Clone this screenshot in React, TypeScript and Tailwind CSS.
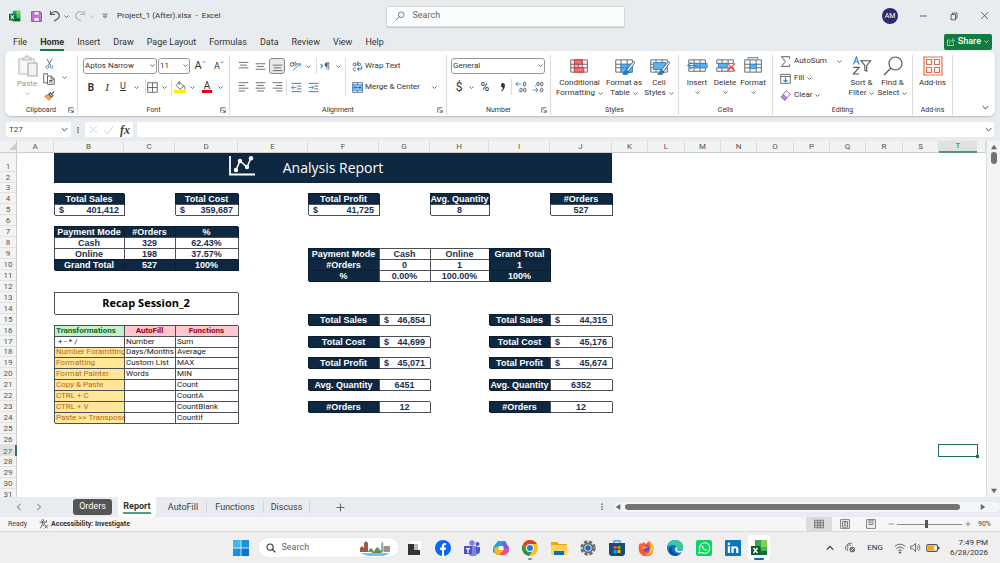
import React from "react";

type Kids = { children?: React.ReactNode };

function Svg({ className = "size-3", box = "0 0 16 16", children }: Kids & { className?: string; box?: string }) {
  return (
    <svg viewBox={box} className={`shrink-0 ${className}`} fill="none" stroke="#555" strokeWidth="1.2" aria-hidden="true">
      {children}
    </svg>
  );
}

function Chevron({ className = "size-[5px]" }: { className?: string }) {
  return (
    <svg viewBox="0 0 10 10" className={`shrink-0 ${className}`} fill="none" stroke="currentColor" strokeWidth="1.4" aria-hidden="true">
      <path d="M1 3l4 4 4-4" />
    </svg>
  );
}

function Tool({ label, w = "w-4", className = "", children }: Kids & { label: string; w?: string; className?: string }) {
  return (
    <button type="button" aria-label={label} className={`flex h-4 shrink-0 items-center justify-center ${w} ${className}`}>
      {children}
    </button>
  );
}

function Divider() {
  return <span className="h-4 w-px shrink-0 bg-[#dcdcdc]" />;
}

function Group({ name, w, launcher, children }: Kids & { name: string; w: string; launcher?: boolean }) {
  return (
    <section aria-label={name} className={`flex shrink-0 flex-col pt-1 pb-px ${w}`}>
      <div className="flex flex-1 flex-col border-r border-[#dcdcdc]">
        <div className="flex-1">{children}</div>
        <div className="relative text-center text-[7px] leading-[10px] text-[#333]">
          {name}
          {launcher && (
            <button type="button" aria-label={`${name} settings`} className="absolute top-[2px] right-[3px]">
              <Svg className="size-[6px]">
                <path d="M2 15V2h12M6 6l8 8M14 7v7H7" strokeWidth="2.2" />
              </Svg>
            </button>
          )}
        </div>
      </div>
    </section>
  );
}

function Combo({ label, value, w }: { label: string; value: string; w: string }) {
  return (
    <div className={`relative h-4 shrink-0 ${w}`}>
      <select aria-label={label} className="block size-full appearance-none rounded-[3px] border border-[#999] bg-white px-px text-[8px] leading-[14px]">
        <option>{value}</option>
      </select>
      <span className="pointer-events-none absolute top-[5px] right-[2px]">
        <Chevron />
      </span>
    </div>
  );
}

function Lines({ rows }: { rows: [number, number, number][] }) {
  return (
    <Svg className="size-[11px]">
      {rows.map(([x1, x2, y]) => (
        <path key={y} d={`M${x1} ${y}H${x2}`} />
      ))}
    </Svg>
  );
}

function Big({ icon, lines, w, below }: { icon: React.ReactNode; lines: string[]; w: string; below?: boolean }) {
  return (
    <button type="button" className={`flex shrink-0 flex-col items-center whitespace-nowrap text-[8px] leading-[10px] ${w}`}>
      <span className="mb-[2px] flex h-[21px] items-center">{icon}</span>
      <span>{lines[0]}</span>
      {lines[1] && (
        <span className="flex items-center gap-[3px]">
          {lines[1]}
          <Chevron />
        </span>
      )}
      {below && <Chevron className="mt-[2px] size-[5px]" />}
    </button>
  );
}

function GridIcon({ children, clip }: Kids & { clip?: boolean }) {
  return (
    <svg viewBox="0 0 24 20" className="h-[18px] w-[21px]" fill="none" stroke="#666" strokeWidth="1.1" aria-hidden="true">
      <path d={clip ? "M2 3h19v4H2zM2 12h19v4H2zM8 3v4M15 3v4M8 12v4M15 12v4" : "M2 3h19v14H2zM2 8h19M2 12h19M8 3v14M15 3v14"} />
      {children}
    </svg>
  );
}

function Ribbon() {
  return (
    <div className="mx-[5px] flex h-[65px] rounded-md bg-white text-[#333] shadow-[0_1px_2px_#b8bcc0]">
      <Group name="Clipboard" w="w-[73px]" launcher>
        <div className="flex pl-2">
          <button type="button" className="flex w-7 flex-col items-center text-[8px] leading-[10px] text-[#999]">
            <Svg className="mb-[2px] size-[22px]" box="0 0 22 22">
              <path d="M3 4h15v15H3z" stroke="#bbb" fill="#f7f7f7" />
              <path d="M7 5V3h2l1-2h2l1 2h2v2z" stroke="#bbb" fill="#eee" />
              <path d="M12 8h9v13h-9z" stroke="#aaa" fill="#f2f2f2" />
            </Svg>
            Paste
            <Chevron className="mt-[2px] size-[5px]" />
          </button>
          <div className="flex w-4 flex-col items-center">
            <Tool label="Cut">
              <Svg className="size-[11px]">
                <path d="M4 1l6 10M12 1L6 11" />
                <circle cx="5" cy="13" r="2" stroke="#2b88d8" />
                <circle cx="11" cy="13" r="2" stroke="#2b88d8" />
              </Svg>
            </Tool>
            <Tool label="Copy">
              <Svg className="size-3">
                <path d="M6 3V1H1v12h4M6 4h5l4 4v7H6zM11 4v4h4M8 10h5M8 12h5" />
              </Svg>
            </Tool>
            <Tool label="Format Painter">
              <Svg className="size-[11px]">
                <path d="M1 9l6-3 4 4-4 5z" fill="#f5a25d" stroke="#d8702a" />
                <path d="M7 6l2-2 4 4-2 2zM11 6l4-4" strokeWidth="1.6" />
              </Svg>
            </Tool>
          </div>
          <span className="mt-5 ml-[5px]">
            <Chevron />
          </span>
        </div>
      </Group>

      <Group name="Font" w="w-[152px]" launcher>
        <div className="flex flex-col gap-[5px] pt-[3px] pl-[5px]">
          <div className="flex gap-px">
            <Combo label="Font" value="Aptos Narrow" w="w-[74px]" />
            <Combo label="Font size" value="11" w="w-8" />
            <Tool label="Increase font size" w="w-[18px]">
              <span className="text-[11px] leading-4">A</span>
              <Svg className="mb-2 size-1"><path d="M2 12l6-7 6 7" stroke="#2b88d8" strokeWidth="3" /></Svg>
            </Tool>
            <Tool label="Decrease font size" w="w-[18px]">
              <span className="text-[9px] leading-4">A</span>
              <Svg className="mb-2 size-1"><path d="M2 5l6 7 6-7" stroke="#2b88d8" strokeWidth="3" /></Svg>
            </Tool>
          </div>
          <div className="flex items-center">
            <Tool label="Bold"><b className="text-[10px]">B</b></Tool>
            <Tool label="Italic"><i className="font-['Liberation_Serif',serif] text-[11px]">I</i></Tool>
            <Tool label="Underline"><u className="text-[9px]">U</u></Tool>
            <Tool label="Underline styles" w="w-[10px]"><Chevron /></Tool>
            <span className="w-1" />
            <Divider />
            <Tool label="Borders" w="w-3">
              <Svg className="size-[11px]"><path d="M1 1h14v14H1zM8 1v14M1 8h14" /></Svg>
            </Tool>
            <Tool label="Border styles" w="w-3"><Chevron /></Tool>
            <span className="w-px" />
            <Divider />
            <Tool label="Fill colour" w="w-[15px]">
              <Svg className="size-3">
                <path d="M7 1l6 6-5 4-5-5zM7 1v4M13 6c2 2 2 4 1 5" />
                <path d="M0 14h16" stroke="#ffee00" strokeWidth="4" />
              </Svg>
            </Tool>
            <Tool label="Fill colours" w="w-[10px]"><Chevron /></Tool>
            <Tool label="Font colour" w="w-5">
              <span className="w-[10px] border-b-[3px] border-[#e8000b] text-[10px] leading-[9px]">A</span>
            </Tool>
            <Tool label="Font colours" w="w-[6px]"><Chevron /></Tool>
          </div>
        </div>
      </Group>

      <Group name="Alignment" w="w-[217px]" launcher>
        <div className="flex pt-[3px] pl-[5px]">
          <div className="flex w-[110px] flex-col gap-[5px]">
            <div className="flex items-center gap-px">
              <Tool label="Top align"><Lines rows={[[1, 15, 2], [3, 13, 6], [1, 15, 10]]} /></Tool>
              <Tool label="Middle align"><Lines rows={[[1, 15, 4], [3, 13, 8], [1, 15, 12]]} /></Tool>
              <Tool label="Bottom align" className="rounded-[3px] border border-[#888] bg-[#e9e9e9]">
                <Lines rows={[[1, 15, 6], [3, 13, 10], [1, 15, 14]]} />
              </Tool>
              <Tool label="Orientation" w="w-[18px]">
                <Svg className="size-3">
                  <circle cx="4" cy="6" r="2.4" />
                  <path d="M6 3l3 5M8 2l3 5" />
                  <path d="M5 14L15 5M11 5h4v4" stroke="#2b88d8" />
                </Svg>
              </Tool>
              <Tool label="Orientations" w="w-[6px]"><Chevron /></Tool>
              <span className="w-[3px]" />
              <Divider />
              <Tool label="Text direction" w="w-[14px]">
                <Svg className="size-[10px]">
                  <path d="M1 5l3 3-3 3" stroke="#2b88d8" strokeWidth="1.8" />
                  <path d="M11 14V3M14 14V3M15 3h-5" />
                  <path d="M11 3a3 3 0 000 6z" fill="#444" />
                </Svg>
              </Tool>
              <Tool label="Text directions" w="w-[10px]"><Chevron /></Tool>
            </div>
            <div className="flex items-center gap-px">
              <Tool label="Align left"><Lines rows={[[1, 15, 1], [1, 10, 5], [1, 15, 9], [1, 10, 13]]} /></Tool>
              <Tool label="Center"><Lines rows={[[1, 15, 1], [3, 13, 5], [1, 15, 9], [3, 13, 13]]} /></Tool>
              <Tool label="Align right"><Lines rows={[[1, 15, 1], [6, 15, 5], [1, 15, 9], [6, 15, 13]]} /></Tool>
              <Divider />
              <Tool label="Decrease indent">
                <Svg className="size-[11px]">
                  <path d="M1 2h14M9 6h6M9 10h6M1 14h14" />
                  <path d="M8 8H1M4 5L1 8l3 3" stroke="#2b88d8" />
                </Svg>
              </Tool>
              <Tool label="Increase indent">
                <Svg className="size-[11px]">
                  <path d="M1 2h14M9 6h6M9 10h6M1 14h14" />
                  <path d="M1 8h7M5 5l3 3-3 3" stroke="#2b88d8" />
                </Svg>
              </Tool>
            </div>
          </div>
          <div className="flex h-[38px] flex-1 flex-col gap-[5px] border-l border-[#dcdcdc] pl-[6px] text-[8px]">
            <button type="button" className="flex h-4 items-center gap-[2px]">
              <Svg className="size-[11px]">
                <circle cx="3.500" cy="5" r="2" />
                <path d="M5.500 2.500V7" />
                <circle cx="10.500" cy="5" r="2" />
                <path d="M8.500 0v7" />
                <path d="M5.500 10.500a2.200 2.200 0 100 3.500" />
                <path d="M14 7v4.500H8M10 9.500l-2 2 2 2.500" stroke="#2b88d8" strokeWidth="1.6" />
              </Svg>
              Wrap Text
            </button>
            <div className="flex h-4 items-center">
              <button type="button" className="flex items-center gap-[2px]">
                <Svg className="size-[11px]">
                  <path d="M1 1h14v14H1z" fill="#fff" />
                  <path d="M1 4h14v8H1z" fill="#8ccaf5" stroke="#2b88d8" />
                  <path d="M8 1v3M8 12v3M3 8h10M5 6L3 8l2 2M11 6l2 2-2 2" stroke="#1565a8" />
                </Svg>
                Merge &amp; Center
              </button>
              <span className="ml-3"><Chevron /></span>
            </div>
          </div>
        </div>
      </Group>

      <Group name="Number" w="w-[104px]" launcher>
        <div className="flex flex-col gap-[5px] pt-[3px] pl-1">
          <Combo label="Number format" value="General" w="w-[94px]" />
          <div className="flex items-center">
            <Tool label="Accounting format"><span className="text-[12px]">$</span></Tool>
            <Tool label="Currencies" w="w-2"><Chevron /></Tool>
            <Tool label="Percent" w="w-5"><span className="text-[12px]">%</span></Tool>
            <Tool label="Comma style">
              <Svg className="size-[10px]">
                <path d="M5 4a3 3 0 116 2c0 4-2 7-5 9l-1-1c2-2 3-4 3-5-2 0-4-2-3-5z" fill="#333" stroke="none" />
              </Svg>
            </Tool>
            <Divider />
            <Tool label="Increase decimal" w="w-[17px]">
              <Svg className="size-3">
                <path d="M8 4H1M4 1L1 4l3 3" stroke="#2b88d8" />
                <ellipse cx="13" cy="4" rx="1.600" ry="2.600" />
                <ellipse cx="8" cy="12" rx="1.600" ry="2.600" />
                <ellipse cx="13" cy="12" rx="1.600" ry="2.600" />
                <path d="M10 6.500h1M4 14.500h1" />
              </Svg>
            </Tool>
            <Tool label="Decrease decimal" w="w-[17px]">
              <Svg className="size-3">
                <ellipse cx="8" cy="4" rx="1.600" ry="2.600" />
                <ellipse cx="13" cy="4" rx="1.600" ry="2.600" />
                <ellipse cx="13" cy="12" rx="1.600" ry="2.600" />
                <path d="M4 6.500h1M10 14.500h1" />
                <path d="M1 12h7M5 9l3 3-3 3" stroke="#2b88d8" />
              </Svg>
            </Tool>
          </div>
        </div>
      </Group>

      <Group name="Styles" w="w-32">
        <div className="flex pl-1">
          <Big
            w="w-[49px]"
            lines={["Conditional", "Formatting"]}
            icon={
              <GridIcon>
                <path d="M6 3h9v5H6zM6 12h11v5H6z" fill="#f87171" stroke="#d13438" />
                <path d="M6 8h5v4H6z" fill="#8ccaf5" stroke="#d13438" />
              </GridIcon>
            }
          />
          <Big
            w="w-10"
            lines={["Format as", "Table"]}
            icon={
              <GridIcon>
                <path d="M8 8h13v9H8z" fill="#5db1ee" stroke="#2b88d8" />
                <path d="M8 12h13M15 8v9" stroke="#2b88d8" />
                <path d="M22 5l2 1-8 11-2-2z" fill="#fff" />
                <path d="M14 14l3 3c-1 3-5 3-7 2 3-1 2-3 4-5z" fill="#2b88d8" stroke="#1565a8" />
              </GridIcon>
            }
          />
          <Big
            w="w-[30px]"
            lines={["Cell", "Styles"]}
            icon={
              <GridIcon>
                <path d="M5 6h14v8H5z" fill="#5db1ee" stroke="#2b88d8" />
                <path d="M22 5l2 1-8 11-2-2z" fill="#fff" />
                <path d="M14 14l3 3c-1 3-5 3-7 2 3-1 2-3 4-5z" fill="#2b88d8" stroke="#1565a8" />
              </GridIcon>
            }
          />
        </div>
      </Group>

      <Group name="Cells" w="w-[94px]">
        <div className="flex pl-1">
          <Big
            w="w-7"
            below
            lines={["Insert"]}
            icon={
              <GridIcon clip>
                <path d="M8 7h15v5H8zM15 7v5" fill="#5db1ee" stroke="#2b88d8" />
                <path d="M12 9.500H1M5 5.500l-4 4 4 4" stroke="#2b88d8" strokeWidth="1.4" />
              </GridIcon>
            }
          />
          <Big
            w="w-7"
            below
            lines={["Delete"]}
            icon={
              <GridIcon clip>
                <path d="M4 7h10v5H4z" fill="#5db1ee" stroke="#2b88d8" />
                <path d="M14 7l9 9M23 7l-9 9" stroke="#e8484f" strokeWidth="1.4" />
              </GridIcon>
            }
          />
          <Big
            w="w-7"
            below
            lines={["Format"]}
            icon={
              <GridIcon>
                <path d="M8 8h7v5H8z" fill="#5db1ee" stroke="#2b88d8" />
                <path d="M6 .5h11M6 0v2M17 0v2" stroke="#2b88d8" />
              </GridIcon>
            }
          />
        </div>
      </Group>

      <Group name="Editing" w="w-[140px]">
        <div className="flex pl-[7px]">
          <div className="mr-1 flex w-[62px] flex-col gap-[5px] text-[8px] leading-3">
            <div className="flex items-center justify-between">
              <button type="button" className="flex items-center gap-[3px]">
                <Svg className="size-[11px]"><path d="M14 4V1H2l6 7-6 7h12v-3" strokeWidth="1.4" /></Svg>
                AutoSum
              </button>
              <Chevron />
            </div>
            <button type="button" className="flex items-center gap-[3px]">
              <Svg className="size-[11px]">
                <path d="M1 2h14v13H1zM1 5h14" />
                <path d="M8 6v7M5 10l3 3 3-3" stroke="#2b88d8" strokeWidth="1.6" />
              </Svg>
              Fill
              <Chevron />
            </button>
            <button type="button" className="flex items-center gap-[3px]">
              <Svg className="size-[11px]">
                <path d="M9 1l6 5-8 9-5-5z" fill="#fff" stroke="#8e4bab" />
                <path d="M5 7l5 4-3 4-5-5z" fill="#c58fdc" stroke="#8e4bab" />
              </Svg>
              Clear
              <Chevron />
            </button>
          </div>
          <Big
            w="w-[31px]"
            lines={["Sort &", "Filter"]}
            icon={
              <Svg className="h-[19px] w-[22px]" box="0 0 22 20">
                <path d="M2 9l3-8 3 8M3 6h4" stroke="#2b88d8" strokeWidth="1.2" />
                <path d="M2 12h6l-6 7h6" />
                <path d="M10 5h10l-4 5v6l-2-1v-5z" />
              </Svg>
            }
          />
          <Big
            w="w-[31px]"
            lines={["Find &", "Select"]}
            icon={
              <Svg className="size-5" box="0 0 20 20">
                <circle cx="12.5" cy="7.500" r="6.500" />
                <path d="M8 12l-7 7" />
              </Svg>
            }
          />
        </div>
      </Group>

      <Group name="Add-ins" w="w-10">
        <Big
          w="w-full"
          lines={["Add-ins"]}
          icon={
            <Svg className="size-5" box="0 0 20 20">
              <path d="M1 1h18v18H1zM3.500 3.500h5v5h-5zM11.500 3.500h5v5h-5zM3.500 11.500h5v5h-5zM11.500 11.500h5v5h-5z" stroke="#e0704f" />
            </Svg>
          }
        />
      </Group>
      <div className="flex flex-1 items-end justify-end pr-[6px] pb-[5px]">
        <button type="button" aria-label="Collapse ribbon"><Chevron className="size-[7px]" /></button>
      </div>
    </div>
  );
}

function ExcelMark({ className }: { className: string }) {
  return (
    <Svg className={className}>
      <path d="M5 1h10v14H5z" fill="#21a366" stroke="none" />
      <path d="M10 1h5v5h-5z" fill="#8fd14f" stroke="none" />
      <path d="M5 8h10v7H5z" fill="#185c37" stroke="none" />
      <path d="M10 6h5v5h-5z" fill="#33c481" stroke="none" />
      <path d="M0 5h9v9H0z" fill="#0f703b" stroke="none" />
      <path d="M2.500 7l4 5M6.500 7l-4 5" stroke="#fff" strokeWidth="1.400" />
    </Svg>
  );
}

function TitleBar() {
  return (
    <header className="grid h-8 shrink-0 grid-cols-[1fr_auto_1fr] items-center text-[8px] text-[#333]">
      <div className="flex items-center pl-[9px]">
        <ExcelMark className="size-3" />
        <button type="button" aria-label="Save" className="ml-[10px]">
          <Svg className="size-[11px]">
            <path d="M1 1h12l2 2v12H1z" fill="#d77fe0" stroke="#a33fb0" strokeWidth="1.600" />
            <path d="M4 1h8v5H4zM4 9h8v6H4z" fill="#fff" stroke="#a33fb0" />
          </Svg>
        </button>
        <button type="button" aria-label="Undo" className="ml-[7px]">
          <Svg className="size-3"><path d="M2 1v5h6M2 6c3-4 7-5 10-2s2 6-1 8l-4 3" strokeWidth="1.500" /></Svg>
        </button>
        <span className="mr-[5px] ml-[3px]"><Chevron /></span>
        <button type="button" aria-label="Redo" className="text-[#aaa]">
          <Svg className="size-3"><path d="M14 1v5H8M14 6c-3-4-7-5-10-2s-2 6 1 8l4 3" stroke="#b5b5b5" strokeWidth="1.500" /></Svg>
        </button>
        <span className="ml-[3px] text-[#aaa]"><Chevron /></span>
        <button type="button" aria-label="Customize toolbar" className="ml-2">
          <Svg className="size-[6px]"><path d="M1 3h14M3 8h10l-5 5z" strokeWidth="2" /></Svg>
        </button>
        <h1 className="ml-[9px] whitespace-pre">Project_1 (After).xlsx  -  Excel</h1>
      </div>
      <label className="ml-[10px] flex h-[21px] w-[239px] items-center gap-2 rounded-[2px] border border-[#d5d9dc] bg-[#fbfcfc] px-2 shadow-[0_1px_1px_#c8ccd0]">
        <Svg className="size-[10px]"><circle cx="10" cy="6" r="4.500" /><path d="M7 9l-6 6" /></Svg>
        <input aria-label="Search" placeholder="Search" className="w-full bg-transparent text-[9px] outline-none placeholder:text-[#666]" />
      </label>
      <div className="flex items-center justify-end gap-[19px] pr-[9px]">
        <span className="flex size-4 items-center justify-center rounded-full bg-[#2f2a70] text-[7px] text-white">AM</span>
        <button type="button" aria-label="Minimize"><Svg className="size-3"><path d="M4 8h9" /></Svg></button>
        <button type="button" aria-label="Restore">
          <Svg className="size-3"><path d="M4 6h6v7H4zM6 6V4h6v7h-2" /></Svg>
        </button>
        <button type="button" aria-label="Close"><Svg className="size-3"><path d="M3 3l9 9M12 3l-9 9" /></Svg></button>
      </div>
    </header>
  );
}

const menus = ["File", "Home", "Insert", "Draw", "Page Layout", "Formulas", "Data", "Review", "View", "Help"];

function MenuBar() {
  return (
    <nav className="flex h-[19px] shrink-0 items-center justify-between pr-2 pl-[13px] text-[9px] text-[#333]">
      <div className="flex gap-[13px]">
        {menus.map((m) =>
          m === "Home" ? (
            <a key={m} href="#home" className="border-b-2 border-[#107c41] pt-[2px] leading-[14px] font-bold">{m}</a>
          ) : (
            <a key={m} href={`#${m}`} className="border-b-2 border-transparent pt-[2px] leading-[14px]">{m}</a>
          ),
        )}
      </div>
      <button type="button" className="flex h-4 items-center gap-[3px] rounded-[2px] bg-[#107c41] px-[3px] text-[9px] font-medium text-white">
        <Svg className="size-2"><path d="M6 4H1v11h12v-4M5 11c0-4 3-6 7-6M10 1l5 4-5 4" stroke="#fff" /></Svg>
        Share
        <Chevron />
      </button>
    </nav>
  );
}

function FormulaBar() {
  return (
    <div className="flex shrink-0 items-center px-[6px] pt-[6px] pb-1 text-[#444]">
      <label className="flex h-[15px] w-[65px] items-center rounded-[2px] bg-white pr-[3px] pl-[3px]">
        <input aria-label="Name box" defaultValue="T27" className="w-full min-w-0 bg-transparent text-[8px] outline-none" />
        <Chevron className="size-[7px]" />
      </label>
      <Svg className="mx-1 size-[6px]"><path d="M8 0v4M8 6v4M8 12v4" strokeWidth="3.500" /></Svg>
      <div className="flex h-[15px] w-12 items-center justify-between rounded-[2px] bg-white pr-[3px] pl-1">
        <Svg className="size-[9px]"><path d="M2 2l12 12M14 2L2 14" stroke="#bbb" /></Svg>
        <Svg className="size-[10px]"><path d="M1 9l4 5L15 2" stroke="#bbb" /></Svg>
        <i className="font-['Liberation_Serif',serif] text-[12px] leading-3 font-bold">fx</i>
      </div>
      <label className="ml-1 flex h-[15px] flex-1 items-center rounded-[2px] bg-white pr-[2px]">
        <input aria-label="Formula" className="w-full bg-transparent text-[8px] outline-none" />
        <Chevron className="size-[7px]" />
      </label>
    </div>
  );
}

const columns: [string, string][] = [
  ["A", "w-[37px]"], ["B", "w-[70px]"], ["C", "w-[51px]"], ["D", "w-[63px]"], ["E", "w-[70px]"], ["F", "w-[71px]"],
  ["G", "w-[51px]"], ["H", "w-[59px]"], ["I", "w-[61px]"], ["J", "w-[62px]"], ["K", "w-[36px]"], ["L", "w-[37px]"],
  ["M", "w-[36px]"], ["N", "w-[36px]"], ["O", "w-[37px]"], ["P", "w-[36px]"], ["Q", "w-[36px]"], ["R", "w-[37px]"],
  ["S", "w-[36px]"], ["T", "w-[38px]"], ["", ""],
];

type Kind = "navy" | "box" | "money" | "note" | "amber" | "good" | "bad" | "banner" | "recap" | "active";
type Cell = { kind: Kind; text: string; cols?: number; rows?: number };

const edge = "shadow-[1px_1px_0_0_#4a5057,inset_1px_1px_0_0_#4a5057]";
const arial = "font-['Liberation_Sans',Arial,sans-serif] text-[9px] font-bold";
const looks: Record<Kind, string> = {
  navy: `bg-[#0e2841] text-white shadow-[1px_1px_0_0_#0a1c30,inset_1px_1px_0_0_#0a1c30] ${arial}`,
  box: `text-[#1c2f52] ${edge} ${arial}`,
  money: `text-[#1c2f52] ${edge} ${arial}`,
  note: `text-[8px] text-[#222] ${edge}`,
  amber: `bg-[#ffe699] text-[8px] text-[#b36b12] ${edge}`,
  good: `bg-[#c6efce] text-[8px] font-bold text-[#0b6b1c] ${edge}`,
  bad: `bg-[#ffc7ce] text-[8px] font-bold text-[#9c0006] ${edge}`,
  banner: "bg-[#0e2841] font-['Open_Sans',sans-serif] text-[14px] text-white",
  recap: `font-['Open_Sans',sans-serif] text-[11px] font-bold text-black ${edge}`,
  active: "",
};

const cells: Record<string, Cell> = {};
const put = (col: string, row: number, kind: Kind, ...texts: string[]) =>
  texts.forEach((text, i) => {
    cells[`${col}${row + i}`] = { kind, text };
  });

cells.B1 = { kind: "banner", text: "Analysis Report", cols: 9, rows: 2 };
cells.B13 = { kind: "recap", text: "Recap Session_2", cols: 3, rows: 2 };
put("B", 4, "navy", "Total Sales");
put("B", 5, "money", "401,412");
put("D", 4, "navy", "Total Cost");
put("D", 5, "money", "359,687");
put("F", 4, "navy", "Total Profit");
put("F", 5, "money", "41,725");
put("H", 4, "navy", "Avg. Quantity");
put("H", 5, "box", "8");
put("J", 4, "navy", "#Orders");
put("J", 5, "box", "527");
put("B", 7, "navy", "Payment Mode");
put("C", 7, "navy", "#Orders");
put("D", 7, "navy", "%");
put("B", 8, "box", "Cash", "Online");
put("C", 8, "box", "329", "198");
put("D", 8, "box", "62.43%", "37.57%");
put("B", 10, "navy", "Grand Total");
put("C", 10, "navy", "527");
put("D", 10, "navy", "100%");
put("F", 9, "navy", "Payment Mode", "#Orders", "%");
put("G", 9, "box", "Cash", "0", "0.00%");
put("H", 9, "box", "Online", "1", "100.00%");
put("I", 9, "navy", "Grand Total", "1", "100%");
["Total Sales", "Total Cost", "Total Profit", "Avg. Quantity", "#Orders"].forEach((name, i) => {
  const row = 15 + i * 2;
  const kind = i < 3 ? "money" : "box";
  put("F", row, "navy", name);
  put("G", row, kind, ["46,854", "44,699", "45,071", "6451", "12"][i]);
  put("I", row, "navy", name);
  put("J", row, kind, ["44,315", "45,176", "45,674", "6352", "12"][i]);
});
put("B", 16, "good", "Transformations");
put("C", 16, "bad", "AutoFill");
put("D", 16, "bad", "Functions");
put("B", 17, "note", " + - * /");
put("B", 18, "amber", "Number Foramtting", "Formatting", "Format Painter", "Copy & Paste", "CTRL + C", "CTRL + V", "Paste >> Transpose");
put("C", 17, "note", "Number", "Days/Months", "Custom List", "Words", "", "", "", "");
put("D", 17, "note", "Sum", "Average", "MAX", "MIN", "Count", "CountA", "CountBlank", "Countif");
put("T", 27, "active", "");

const covered = new Set(["C1", "D1", "E1", "F1", "G1", "H1", "I1", "J1", "B2", "C2", "D2", "E2", "F2", "G2", "H2", "I2", "J2", "C13", "D13", "B14", "C14", "D14"]);

function CellBody({ cell }: { cell: Cell }) {
  switch (cell.kind) {
    case "money":
      return <div className="flex justify-between px-[5px]"><span>$</span><span>{cell.text}</span></div>;
    case "note":
    case "amber":
    case "good":
      return <div className="pl-[2px] whitespace-pre">{cell.text}</div>;
    case "banner":
      return (
        <>
          <div className="flex justify-center">{cell.text}</div>
          <svg viewBox="0 0 26 20" className="absolute top-[3px] left-[175px] h-5 w-[26px]" fill="none" stroke="#fff" strokeWidth="1.800" aria-hidden="true">
            <path d="M1 0v18.500h25" />
            <path d="M7 14l4-9 7 6 4-9" strokeWidth="1.500" />
            <g fill="#fff" stroke="none">
              <circle cx="7" cy="14" r="2.200" /><circle cx="11" cy="5" r="2.200" /><circle cx="18" cy="11" r="2.200" /><circle cx="22" cy="2.300" r="2.200" />
            </g>
          </svg>
        </>
      );
    case "active":
      return (
        <div className="absolute -inset-px border border-[#1e7145]">
          <span className="absolute -right-[2px] -bottom-[2px] size-[3px] bg-[#1e7145]" />
        </div>
      );
    default:
      return <div className="flex justify-center">{cell.text}</div>;
  }
}

function rowHeight(n: number) {
  if (n === 1) return "h-[19px]";
  return n === 3 || n === 18 ? "h-[10px]" : "h-[11px]";
}

function Sheet() {
  return (
    <div className="flex min-h-0 flex-1">
      <div className="flex-1 overflow-hidden bg-white">
        <table className="w-full table-fixed border-separate border-spacing-0 text-[8px] leading-[10px]">
          <colgroup>
            <col className="w-[17px]" />
            {columns.map(([name, w]) => <col key={name} className={w} />)}
          </colgroup>
          <thead>
            <tr className="h-3 bg-[#f1f2f2] text-[#555]">
              <th className="border-r border-b border-[#ccc] p-0">
                <svg viewBox="0 0 8 8" className="ml-auto size-2" aria-hidden="true"><path d="M8 0v7H1z" fill="#ccc" /></svg>
              </th>
              {columns.map(([name]) => (
                <th
                  key={name}
                  scope="col"
                  className={name === "T" ? "border-b-2 border-[#4f9474] bg-[#dfe2e1] p-0 font-normal text-[#2e7d57]" : "border-r border-b border-r-[#dedede] border-b-[#ccc] p-0 font-normal"}
                >
                  {name}
                </th>
              ))}
            </tr>
          </thead>
          <tbody>
            {Array.from({ length: 31 }, (_, i) => i + 1).map((n) => (
              <tr key={n} className={rowHeight(n)}>
                <th
                  scope="row"
                  className={
                    n === 27
                      ? "border-r-2 border-[#2e7d57] bg-[#dfe2e1] p-0 align-bottom leading-[9px] font-normal text-[#2e7d57]"
                      : "border-r border-b border-r-[#ccc] border-b-[#e2e2e2] bg-[#f3f3f3] p-0 align-bottom leading-[9px] font-normal text-[#555]"
                  }
                >
                  {n}
                </th>
                {columns.map(([name]) => {
                  const key = `${name}${n}`;
                  const cell = cells[key];
                  if (covered.has(key)) return null;
                  if (!cell) return <td key={key} className="p-0" />;
                  const clip = key === "B24" || cell.kind === "active" ? "" : "overflow-hidden";
                  return (
                    <td key={key} colSpan={cell.cols} rowSpan={cell.rows} className={`relative p-0 whitespace-nowrap ${clip} ${looks[cell.kind]}`}>
                      <CellBody cell={cell} />
                    </td>
                  );
                })}
              </tr>
            ))}
          </tbody>
        </table>
      </div>
      <div className="flex w-[14px] flex-col items-center border-l border-[#ddd] bg-[#f3f4f5] py-[3px]">
        <svg viewBox="0 0 8 8" className="size-[6px]" fill="#666" aria-hidden="true"><path d="M4 1l4 6H0z" /></svg>
        <span className="mt-[2px] h-3 w-[6px] rounded-full bg-[#737373]" />
        <svg viewBox="0 0 8 8" className="mt-auto size-[6px]" fill="#666" aria-hidden="true"><path d="M4 7L0 1h8z" /></svg>
      </div>
    </div>
  );
}

function SheetTabs() {
  return (
    <div className="flex h-5 shrink-0 items-center bg-[#e8ebef] text-[9px] text-[#444]">
      <div className="flex w-[73px] gap-3 pl-[15px] text-[#999]">
        <button type="button" aria-label="Previous sheet"><Chevron className="size-2 rotate-90" /></button>
        <button type="button" aria-label="Next sheet"><Chevron className="size-2 -rotate-90" /></button>
      </div>
      <button type="button" className="mr-[6px] h-4 w-[39px] rounded-[3px] bg-[#555] text-white">Orders</button>
      <button type="button" className="flex h-5 w-[38px] items-start justify-center rounded-b-sm bg-white pt-[3px]">
        <span className="border-b-2 border-[#4f9e7c] leading-3 font-bold text-[#333]">Report</span>
      </button>
      <button type="button" className="w-[51px] border-r border-[#d3d7db] pl-1 leading-3">AutoFill</button>
      <button type="button" className="w-[57px] border-r border-[#d3d7db] leading-3">Functions</button>
      <button type="button" className="w-[46px] border-r border-[#d3d7db] leading-3">Discuss</button>
      <button type="button" aria-label="New sheet" className="ml-[26px]"><Svg className="size-[9px]"><path d="M8 1v14M1 8h14" strokeWidth="1.600" /></Svg></button>
      <div className="ml-auto flex w-[402px] items-center">
        <Svg className="mr-[9px] size-2"><path d="M8 1v3M8 6v3M8 11v3" strokeWidth="2.500" /></Svg>
        <div className="flex h-[10px] flex-1 items-center rounded-full bg-[#f4f5f6]">
          <svg viewBox="0 0 8 8" className="mr-1 size-[6px]" fill="#666" aria-hidden="true"><path d="M7 0v8L1 4z" /></svg>
          <span className="h-[6px] flex-1 rounded-full bg-[#737373]" />
          <svg viewBox="0 0 8 8" className="mr-[14px] ml-5 size-[6px]" fill="#666" aria-hidden="true"><path d="M1 0v8l6-4z" /></svg>
        </div>
      </div>
    </div>
  );
}

function StatusBar() {
  return (
    <div className="flex h-[15px] shrink-0 items-center border-b border-[#d9d9d9] bg-[#f6f6f7] pl-2 text-[7px] text-[#444]">
      <span>Ready</span>
      <button type="button" className="ml-3 flex items-center gap-[2px] font-bold text-[#333]">
        <Svg className="size-[10px]">
          <circle cx="6" cy="2.500" r="1.600" />
          <path d="M1 5h11M5 5v5l-3 5M8 5v4l-1 2M9 9l5 6M14 9l-5 6M12 5V2" strokeWidth="1.500" />
        </Svg>
        Accessibility: Investigate
      </button>
      <div className="ml-auto flex h-full items-center pr-[9px]">
        <button type="button" aria-label="Normal view" className="flex h-full w-[26px] items-center justify-center bg-[#dcdcdc]">
          <Svg className="size-[10px]"><path d="M1 2h14v12H1zM1 6h14M1 10h14M6 2v12M10 2v12" /></Svg>
        </button>
        <button type="button" aria-label="Page layout view" className="flex w-[26px] justify-center">
          <Svg className="size-[10px]"><path d="M1 1h14v14H1zM4 4h8v9H4zM6 6h4M6 8h4M6 10h4" /></Svg>
        </button>
        <button type="button" aria-label="Page break view" className="flex w-[26px] justify-center">
          <Svg className="size-[10px]"><path d="M1 1h14v14H1zM5 1v8h6V1M8 1v6" /></Svg>
        </button>
        <button type="button" aria-label="Zoom out" className="ml-[3px]"><Svg className="size-2"><path d="M3 8h11" /></Svg></button>
        <label className="relative mx-[2px] flex h-3 w-[65px] items-center">
          <input
            type="range"
            aria-label="Zoom"
            min={10}
            max={190}
            defaultValue={90}
            className="h-px w-full appearance-none bg-[#888] [&::-webkit-slider-thumb]:h-2 [&::-webkit-slider-thumb]:w-[3px] [&::-webkit-slider-thumb]:appearance-none [&::-webkit-slider-thumb]:bg-[#555]"
          />
        </label>
        <button type="button" aria-label="Zoom in"><Svg className="size-2"><path d="M3 8h10M8 3v10" /></Svg></button>
        <span className="ml-[6px]">90%</span>
      </div>
    </div>
  );
}

const apps: { name: string; art: React.ReactNode; mark?: string }[] = [
  { name: "Task view", art: <><path d="M5 1h10v12H5z" fill="#fff" /><path d="M2 4h6v6h6v5H2z" fill="#333" /><path d="M8 4h4v6H8z" fill="#bbb" /></> },
  { name: "Facebook", art: <><circle cx="8" cy="8" r="8" fill="#0866ff" /><path d="M7 16v-6H5V7.500h2V6c0-2.300 1.300-3.300 4-3v2c-1.500 0-2 .2-2 1.200v1.300h2L10.600 10H9v6z" fill="#fff" /></> },
  { name: "Teams", art: <><circle cx="8" cy="3" r="2.700" fill="#7b83eb" /><circle cx="13.500" cy="4" r="2" fill="#5059c9" /><path d="M5 6h8v6a4 4 0 01-8 2z" fill="#7b83eb" /><path d="M12 7h4v4c0 3-3 4-4 2z" fill="#5059c9" /><path d="M0 6h8v8H0z" fill="#4b53bc" /><path d="M2 8h4v1.200H4.600V13H3.400V9.200H2z" fill="#fff" /></> },
  { name: "Copilot", art: <><path d="M5 1h6l2 5H6L4 13c-5 1-5-3-3-7z" fill="#18a5dd" /><path d="M11 1c3 0 2 3 4 5s1 5 0 7L9 6z" fill="#8b52e0" /><path d="M1 8l5-2 4 1-3 8H4c-3-1-2-4-3-7z" fill="#f2b51d" /><path d="M15 8c1 4-1 7-4 7H6l5-6z" fill="#ef4f79" /><path d="M6.500 6h4L9 10H5.500z" fill="#fff" /></> },
  { name: "Chrome", mark: "w-1 bg-[#888]", art: <><circle cx="8" cy="8" r="8" fill="#fbc116" /><path d="M1.100 4A8 8 0 0114.900 4H8a4 4 0 00-4 4z" fill="#e33b2e" /><path d="M1.100 4a8 8 0 006 12L11 10a4 4 0 01-6.500 0z" fill="#279847" /><circle cx="8" cy="8" r="3.900" fill="#fff" /><circle cx="8" cy="8" r="3" fill="#2a75e8" /></> },
  { name: "File Explorer", art: <><path d="M0 2h6l2 2h8v11H0z" fill="#e9a31b" /><path d="M0 5h16v10H0z" fill="#ffd254" /><path d="M3 11h10v4H3z" fill="#0f6cbd" /></> },
  { name: "Settings", art: <><circle cx="8" cy="8" r="6.200" stroke="#6b7078" strokeWidth="3" strokeDasharray="3.200 1.700" /><circle cx="8" cy="8" r="5.400" fill="#6b7078" /><circle cx="8" cy="8" r="3.600" fill="#dfe6ee" /><circle cx="8" cy="8" r="2.700" fill="#1769c4" /></> },
  { name: "Microsoft Store", art: <><path d="M5 4V1h6v3" stroke="#37a5e5" strokeWidth="1.400" /><path d="M0 3h16v11l-2 2H2l-2-2z" fill="#174a7c" /><path d="M4.500 6h3v3h-3z" fill="#f25022" /><path d="M8.500 6h3v3h-3z" fill="#7fba00" /><path d="M4.500 10h3v3h-3z" fill="#00a4ef" /><path d="M8.500 10h3v3h-3z" fill="#ffb900" /></> },
  { name: "Firefox", art: <><path d="M2 3l2 1 1-2 3 2 3-3c3 2 5 5 4.500 8A7.400 7.400 0 01.700 9C.600 6 1 5 2 3z" fill="#ff5a36" /><path d="M11 1c4 3 5 6 4 9-1 4-5 6-8 5 5-1 7-6 4-14z" fill="#ffc52f" /><circle cx="8" cy="8.500" r="3.300" fill="#7b3fd6" /><path d="M3 7c3-2 5 0 7 0-2 2-4 1-5 3z" fill="#ff9a1f" /></> },
  { name: "Edge", art: <><circle cx="8" cy="8" r="8" fill="#1676c6" /><path d="M0 7C1 2 5 0 8 0c5 0 8 3 8 7 0 3-3 4-6 3 1-3-1-5-4-5S1 6 0 7z" fill="#38c7a4" /><path d="M5 8c0 4 3 7 8 6-3 3-8 2-10-1s-1-6 3-7z" fill="#0b4a9e" /><path d="M9 7c2 0 1 2 1 3 2 2 5 1 6-1l-1 3c-3 2-7 0-7-3z" fill="#eef4f8" /></> },
  { name: "WhatsApp", art: <><rect width="16" height="16" rx="2" fill="#0bd45f" /><path d="M3 13l.800-3A5.200 5.200 0 118 13.200a5 5 0 01-2.300-.700z" stroke="#fff" strokeWidth="1.100" /><path d="M6 5.200c-1 1 0 3 1.400 4.300S10.500 11 11 10L9.600 8.800l-.700.700C8 9 7.300 8.300 7 7.500l.500-.700z" fill="#fff" /></> },
  { name: "LinkedIn", art: <><rect width="16" height="16" rx="1" fill="#0a76b8" /><circle cx="3.900" cy="3.900" r="1.300" fill="#fff" /><path d="M2.800 6.200H5V13H2.800zM6.400 6.200h2.100v1c.900-1.600 4.900-1.700 4.900 2V13h-2.200V9.600c0-2-2.600-1.800-2.600 0V13H6.400z" fill="#fff" /></> },
  { name: "Excel", mark: "w-[10px] bg-[#0067c0]", art: <><path d="M4 0h12v15H4z" fill="#2fa84f" /><path d="M10 0h6v7h-6z" fill="#86cf4d" /><path d="M4 8h12v7H4z" fill="#146b37" /><path d="M10 7h6v4h-6z" fill="#3fb765" /><path d="M0 6h9v9H0z" fill="#0f5c32" /><path d="M2.500 8l4 5M6.500 8l-4 5" stroke="#fff" strokeWidth="1.400" /></> },
];

function Taskbar() {
  return (
    <footer className="grid h-[31px] shrink-0 grid-cols-[1fr_auto_1fr] items-center bg-[#efefef] text-[8px] text-[#333]">
      <span />
      <div className="flex items-center pl-[2px]">
        <button type="button" aria-label="Start">
          <svg viewBox="0 0 16 16" className="size-4" fill="#1a8fe3" aria-hidden="true">
            <path d="M0 0h7.600v7.600H0z" fill="#3db8f2" /><path d="M8.400 0H16v7.600H8.400zM0 8.400h7.600V16H0z" /><path d="M8.400 8.400H16V16H8.400z" fill="#0a74d1" />
          </svg>
        </button>
        <label className="mr-px ml-[9px] flex h-[19px] w-[141px] items-center gap-[6px] rounded-full bg-white px-2 shadow-[0_0_1px_#bbb]">
          <Svg className="size-[10px]"><circle cx="6.500" cy="6.500" r="5" strokeWidth="1.800" stroke="#333" /><path d="M10 10l5 5" strokeWidth="2" stroke="#333" /></Svg>
          <input aria-label="Search Windows" placeholder="Search" className="w-full min-w-0 bg-transparent text-[9px] outline-none placeholder:text-[#666]" />
          <svg viewBox="0 0 32 16" className="h-4 w-8 shrink-0" aria-hidden="true">
            <path d="M1 13h30l-6 3H9z" fill="#6cc7ee" />
            <path d="M1 12V8l2-2 2 2V3l2-2 2 2v9z" fill="#9c5b45" />
            <path d="M25 12V6h6v6z" fill="#a39089" />
            <path d="M9 12c2-5 4-5 6 0 2-6 4-6 6-2l4 2z" fill="#5d9c5a" />
            <path d="M12 13c3-2 7-2 12 0z" fill="#8a7059" />
            <path d="M22 4l2-3 1 10h-3z" fill="#86b8b2" />
          </svg>
        </label>
        <div className="flex">
          {apps.map((a) => (
            <button
              key={a.name}
              type="button"
              aria-label={a.name}
              className={`relative flex h-[25px] items-center justify-center rounded ${a.name === "Excel" ? "w-[22px] bg-white" : "w-[29px]"}`}
            >
              <svg viewBox="0 0 16 16" className="size-4" fill="none" aria-hidden="true">{a.art}</svg>
              {a.mark && <span className={`absolute bottom-0 h-[2px] rounded-full ${a.mark}`} />}
            </button>
          ))}
        </div>
      </div>
      <div className="flex items-center justify-end pr-3">
        <button type="button" aria-label="Hidden icons"><Chevron className="size-2 rotate-180" /></button>
        <Svg className="ml-[10px] size-[11px]">
          <path d="M4 12a4 4 0 010-7 5 5 0 018-2M5 8a3 3 0 015-3M6 13A3 3 0 016 8" />
          <circle cx="12" cy="11" r="3.500" fill="#777" /><path d="M10 13l4-4" stroke="#fff" />
        </Svg>
        <span className="ml-3">ENG</span>
        <Svg className="ml-[11px] size-3"><path d="M1 6c4-4 10-4 14 0M3 9c3-3 7-3 10 0M5.500 11.500c2-1.500 3-1.500 5 0" /><circle cx="8" cy="14" r="1" fill="#555" /></Svg>
        <Svg className="ml-1 size-[11px]"><path d="M1 6h3l4-4v12l-4-4H1zM10 5c2 2 2 4 0 6M12 3c3 3 3 7 0 10" /></Svg>
        <Svg className="ml-[5px] h-2 w-[14px]" box="0 0 24 14"><rect x="1" y="1" width="19" height="12" rx="3" strokeWidth="2" /><path d="M3 3h11v8H3z" fill="#f3a800" stroke="none" /><path d="M22 5v4" strokeWidth="3" /></Svg>
        <div className="ml-[10px] text-right leading-[10px]">
          <div>7:49 PM</div>
          <div>6/28/2026</div>
        </div>
      </div>
    </footer>
  );
}

export default function App() {
  return (
    <div className="flex h-screen flex-col overflow-hidden bg-[#e8ecef] font-['Roboto','Noto_Sans',sans-serif]">
      <TitleBar />
      <MenuBar />
      <Ribbon />
      <FormulaBar />
      <Sheet />
      <SheetTabs />
      <StatusBar />
      <Taskbar />
    </div>
  );
}
